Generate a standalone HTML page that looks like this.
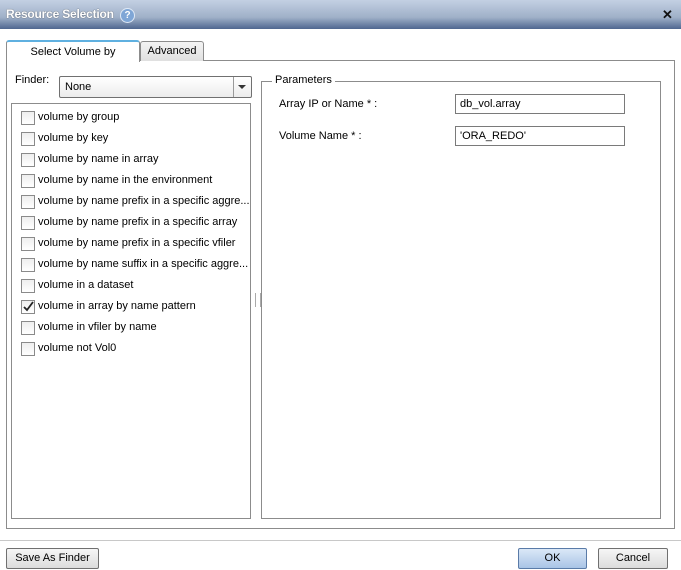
<!DOCTYPE html>
<html><head><style>
body{margin:0;width:681px;height:570px;background:#fff;font-family:"Liberation Sans",sans-serif;font-size:11px;color:#000;position:relative;overflow:hidden}
.a{position:absolute}
.title{left:0;top:0;width:681px;height:29px;background:linear-gradient(#c3d0e3,#9fb0c8 60%,#4e6690)}
.title span{position:absolute;left:6px;top:7px;font-family:"Liberation Sans",sans-serif;font-weight:bold;font-size:12px;color:#fff;text-shadow:0 0 1px #333;letter-spacing:-0.2px}
.help{left:120px;top:8px;width:13px;height:13px;border-radius:50%;background:#7fa6d6;border:1px solid #dfe9f6;color:#fff;font-size:10px;font-weight:bold;text-align:center;line-height:13px}
.cb{position:absolute;left:9px;width:12px;height:12px;border:1px solid #8a8a8a;background:linear-gradient(#eee,#fff)}
.row{position:absolute;left:26px;font-size:11px}
.inp{border:1px solid #7a7a7a;background:#fff;height:20px;box-sizing:border-box;padding:3px 4px}
.btn{border:1px solid #707070;border-radius:2px;background:linear-gradient(#f6f6f6,#dcdcdc);text-align:center;line-height:19px;box-sizing:border-box;height:21px}
</style></head><body>
<div class="a title"><span>Resource Selection</span></div>
<div class="a help">?</div>
<div class="a" style="left:662px;top:7px;color:#111;font-weight:bold;font-size:13px">✕</div>

<div class="a" style="left:6px;top:60px;width:669px;height:469px;border:1px solid #8c8c8c;box-sizing:border-box"></div>
<div class="a" style="left:140px;top:41px;width:64px;height:20px;border:1px solid #8c8c8c;border-bottom:none;background:linear-gradient(#f4f4f4,#e0e0e0);box-sizing:border-box;text-align:center;line-height:18px;border-radius:3px 3px 0 0">Advanced</div>
<div class="a" style="left:6px;top:40px;width:134px;height:22px;border:1px solid #8c8c8c;border-top:2px solid #5fb0e0;border-bottom:none;background:#fff;box-sizing:border-box;text-align:center;line-height:21px;border-radius:3px 3px 0 0">Select Volume by</div>

<div class="a" style="left:15px;top:74px">Finder:</div>
<div class="a" style="left:59px;top:76px;width:193px;height:22px;border:1px solid #707070;border-radius:2px;box-sizing:border-box;background:linear-gradient(#fff,#ececec)"><span style="position:absolute;left:5px;top:4px">None</span><div style="position:absolute;right:0;top:0;width:17px;height:20px;border-left:1px solid #9a9a9a"><div style="position:absolute;left:4px;top:8px;border-left:4px solid transparent;border-right:4px solid transparent;border-top:4px solid #333"></div></div></div>

<div class="a" style="left:11px;top:103px;width:240px;height:416px;border:1px solid #8c8c8c;box-sizing:border-box">
<div class="cb" style="top:7px"></div><div class="row" style="top:7px">volume by group</div>
<div class="cb" style="top:28px"></div><div class="row" style="top:28px">volume by key</div>
<div class="cb" style="top:49px"></div><div class="row" style="top:49px">volume by name in array</div>
<div class="cb" style="top:70px"></div><div class="row" style="top:70px">volume by name in the environment</div>
<div class="cb" style="top:91px"></div><div class="row" style="top:91px">volume by name prefix in a specific aggre...</div>
<div class="cb" style="top:112px"></div><div class="row" style="top:112px">volume by name prefix in a specific array</div>
<div class="cb" style="top:133px"></div><div class="row" style="top:133px">volume by name prefix in a specific vfiler</div>
<div class="cb" style="top:154px"></div><div class="row" style="top:154px">volume by name suffix in a specific aggre...</div>
<div class="cb" style="top:175px"></div><div class="row" style="top:175px">volume in a dataset</div>
<div class="cb" style="top:196px"><svg width="12" height="12" style="position:absolute;left:0;top:0"><path d="M2 6 L5 9 L11 1" stroke="#222" stroke-width="1.8" fill="none"/></svg></div><div class="row" style="top:196px">volume in array by name pattern</div>
<div class="cb" style="top:217px"></div><div class="row" style="top:217px">volume in vfiler by name</div>
<div class="cb" style="top:238px"></div><div class="row" style="top:238px">volume not Vol0</div>
</div>
<div class="a" style="left:255px;top:293px;width:4px;height:14px;border-left:1px solid #aaa;border-right:1px solid #aaa"></div>

<div class="a" style="left:261px;top:81px;width:400px;height:438px;border:1px solid #8c8c8c;box-sizing:border-box"></div>
<div class="a" style="left:272px;top:74px;background:#fff;padding:0 3px">Parameters</div>
<div class="a" style="left:279px;top:98px">Array IP or Name * :</div>
<div class="a inp" style="left:455px;top:94px;width:170px">db_vol.array</div>
<div class="a" style="left:279px;top:130px">Volume Name * :</div>
<div class="a inp" style="left:455px;top:126px;width:170px">'ORA_REDO'</div>

<div class="a" style="left:0;top:540px;width:681px;height:1px;background:#c8c8c8"></div>
<div class="a btn" style="left:6px;top:548px;width:93px">Save As Finder</div>
<div class="a btn" style="left:518px;top:548px;width:69px;border-color:#5a7ba8;background:linear-gradient(#dbe8f7,#a9c4e6)">OK</div>
<div class="a btn" style="left:598px;top:548px;width:70px">Cancel</div>
</body></html>
